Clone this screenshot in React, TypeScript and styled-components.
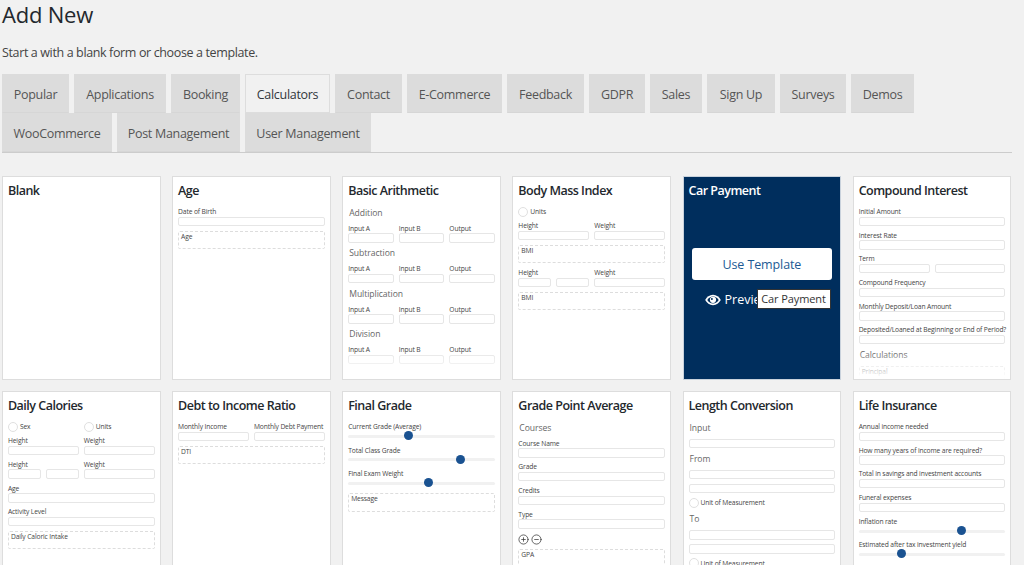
import React from "react";
import styled, { createGlobalStyle } from "styled-components";
import { CirclePlus, CircleMinus } from "lucide-react";

const Global = createGlobalStyle`
  html, body { margin: 0; padding: 0; height: 565px; overflow: hidden; background: #f1f1f1; }
  body { font-family: "Open Sans", "Noto Sans", sans-serif; color: #444; }
`;

const Page = styled.div`
  width: 1010px;
  margin-left: 2px;
`;
const Title = styled.h1`
  margin: 0;
  height: 29px;
  font-size: 22px;
  line-height: 28px;
  font-weight: 400;
  letter-spacing: -0.2px;
  color: #23282d;
`;
const Intro = styled.p`
  margin: 16px 0 13px;
  height: 16px;
  font-size: 12.5px;
  line-height: 16px;
  letter-spacing: -0.37px;
  color: #444;
`;
const Tabs = styled.nav`
  display: flex;
  flex-wrap: wrap;
  column-gap: 5px;
  height: 78px;
  border-bottom: 1px solid #ccc;
  align-content: flex-start;
`;
const Tab = styled.div<{ $active?: boolean; $w: number }>`
  box-sizing: border-box;
  flex: none;
  width: ${(p) => p.$w}px;
  height: 39px;
  padding-top: 2px;
  display: flex;
  align-items: center;
  justify-content: center;
  font-size: 12.5px;
  letter-spacing: -0.3px;
  border: 1px solid ${(p) => (p.$active ? "#ddd" : "#dcdcdc")};
  border-bottom-color: ${(p) => (p.$active ? "#ddd" : "#d6d6d6")};
  background: ${(p) => (p.$active ? "#f1f1f1" : "#dcdcdc")};
  color: ${(p) => (p.$active ? "#32373c" : "#555")};
`;
const Grid = styled.div`
  display: grid;
  grid-template-columns: repeat(6, 1fr);
  grid-auto-rows: 204px;
  column-gap: 11.4px;
  row-gap: 11px;
  width: 1009.5px;
  margin: 23px 0 0 -0.1px;
`;
const Card = styled.article`
  position: relative;
  box-sizing: border-box;
  overflow: hidden;
  padding: 6px 5px 0;
  background: #fff;
  border: 1px solid #ddd;
  &::after {
    content: "";
    position: absolute;
    left: 0;
    right: 0;
    bottom: 0;
    height: 28px;
    background: linear-gradient(rgba(255, 255, 255, 0), #fff);
  }
`;
const CardTitle = styled.h3`
  margin: 0 0 10px;
  height: 14px;
  font-size: 12.5px;
  line-height: 16px;
  font-weight: 600;
  letter-spacing: -0.5px;
  white-space: nowrap;
  color: #23282d;
`;
const Label = styled.div`
  height: 9.5px;
  font-size: 6.7px;
  line-height: 9.5px;
  letter-spacing: -0.12px;
  white-space: nowrap;
  color: #444;
`;
const Input = styled.div`
  box-sizing: border-box;
  height: 9.5px;
  border: 1px solid #e6e6e6;
  border-radius: 2px;
  background: #fff;
`;
const SplitInput = styled(Input)`
  flex: 1 1 0;
  min-width: 0;
`;
const Field = styled.div`
  flex: 1 1 0;
  min-width: 0;
  margin-bottom: 4.7px;
`;
const Row = styled.div`
  display: flex;
  gap: 5px;
`;
const Heading = styled.div<{ $top?: number }>`
  height: 12px;
  margin: ${(p) => p.$top ?? 0}px 0 4.8px 1px;
  font-size: 8.6px;
  line-height: 13px;
  letter-spacing: -0.05px;
  color: #666;
`;
const Output = styled.div`
  box-sizing: border-box;
  height: 18.5px;
  margin-bottom: 4.7px;
  padding: 0 2px;
  border: 1px dashed #ddd;
  border-radius: 2px;
  font-size: 6.7px;
  line-height: 9px;
  letter-spacing: -0.12px;
  color: #444;
`;
const RadioRow = styled.div`
  flex: 1 1 0;
  display: flex;
  align-items: center;
  gap: 2px;
  height: 9.5px;
  margin-bottom: 4.7px;
  font-size: 6.7px;
  letter-spacing: -0.12px;
  color: #444;
`;
const Dot = styled.span`
  box-sizing: border-box;
  flex: none;
  width: 10px;
  height: 10px;
  border: 1px solid #e0e0e0;
  border-radius: 50%;
  background: #fff;
`;
const Slider = styled.div`
  position: relative;
  height: 9.5px;
  display: flex;
  align-items: center;
  &::before {
    content: "";
    flex: 1;
    height: 3px;
    border-radius: 2px;
    background: #f1f1f1;
  }
`;
const Thumb = styled.span`
  position: absolute;
  top: -0.5px;
  width: 9px;
  height: 9px;
  margin-left: -4.5px;
  border-radius: 50%;
  background: #1a5291;
`;
const Repeater = styled.div`
  display: flex;
  gap: 2px;
  height: 11px;
  margin-bottom: 4px;
  color: #333;
`;

/* Car Payment, hover state */
const ActiveCard = styled.article`
  position: relative;
  box-sizing: border-box;
  display: flex;
  flex-direction: column;
  align-items: center;
  padding: 6px 0 0;
  background: #002e5d;
  border: 1px solid #c9d2dc;
`;
const ActiveTitle = styled.h3`
  align-self: flex-start;
  margin: 0 0 51px 5px;
  height: 14px;
  font-size: 12.5px;
  line-height: 16px;
  font-weight: 600;
  letter-spacing: -0.5px;
  color: #fff;
`;
const UseButton = styled.div`
  width: 140px;
  height: 32px;
  padding-top: 1px;
  box-sizing: border-box;
  display: flex;
  align-items: center;
  justify-content: center;
  border-radius: 3px;
  background: #fff;
  font-size: 12.5px;
  letter-spacing: -0.1px;
  color: #1d5a94;
`;
const Preview = styled.div`
  align-self: flex-start;
  display: flex;
  align-items: center;
  gap: 4px;
  margin: 11px 0 0 21px;
  font-size: 12.5px;
  line-height: 18px;
  color: #fff;
`;
const Tip = styled.div`
  position: absolute;
  left: 73px;
  top: 111.5px;
  box-sizing: border-box;
  width: 74px;
  height: 20px;
  display: flex;
  align-items: center;
  justify-content: center;
  background: #fff;
  border: 1px solid #333;
  font-size: 11px;
  letter-spacing: -0.1px;
  white-space: nowrap;
  color: #333;
`;

type Labelled = string | [string, number];
type Item =
  | { k: "f"; labels: Labelled[] }
  | { k: "o"; text: string }
  | { k: "h"; text: string; top?: number }
  | { k: "r"; labels: string[] }
  | { k: "s"; label: string; at: number }
  | { k: "i" }
  | { k: "p" };

const f = (...labels: Labelled[]): Item => ({ k: "f", labels });
const o = (text: string): Item => ({ k: "o", text });
const h = (text: string, top?: number): Item => ({ k: "h", text, top });
const r = (...labels: string[]): Item => ({ k: "r", labels });
const s = (label: string, at: number): Item => ({ k: "s", label, at });
const arithmetic = [f("Input A", "Input B", "Output")];

const cards: { title: string; items: Item[]; active?: boolean }[] = [
  { title: "Blank", items: [] },
  { title: "Age", items: [f("Date of Birth"), o("Age")] },
  {
    title: "Basic Arithmetic",
    items: [
      h("Addition"), ...arithmetic,
      h("Subtraction"), ...arithmetic,
      h("Multiplication"), ...arithmetic,
      h("Division"), ...arithmetic,
    ],
  },
  {
    title: "Body Mass Index",
    items: [r("Units"), f("Height", "Weight"), o("BMI"), f(["Height", 2], "Weight"), o("BMI")],
  },
  { title: "Car Payment", items: [], active: true },
  {
    title: "Compound Interest",
    items: [
      f("Initial Amount"), f("Interest Rate"), f(["Term", 2]),
      f("Compound Frequency"), f("Monthly Deposit/Loan Amount"),
      f("Deposited/Loaned at Beginning or End of Period?"),
      h("Calculations"), o("Principal"),
    ],
  },
  {
    title: "Daily Calories",
    items: [r("Sex", "Units"), f("Height", "Weight"), f(["Height", 2], "Weight"), f("Age"), f("Activity Level"), o("Daily Caloric Intake")],
  },
  { title: "Debt to Income Ratio", items: [f("Monthly Income", "Monthly Debt Payment"), o("DTI")] },
  {
    title: "Final Grade",
    items: [s("Current Grade (Average)", 41), s("Total Class Grade", 76.5), s("Final Exam Weight", 54.4), o("Message")],
  },
  {
    title: "Grade Point Average",
    items: [h("Courses"), f("Course Name"), f("Grade"), f("Credits"), f("Type"), { k: "p" }, o("GPA")],
  },
  {
    title: "Length Conversion",
    items: [
      h("Input"), { k: "i" },
      h("From", 2), { k: "i" }, { k: "i" }, r("Unit of Measurement"),
      h("To", 1), { k: "i" }, { k: "i" }, r("Unit of Measurement"),
    ],
  },
  {
    title: "Life Insurance",
    items: [
      f("Annual income needed"), f("How many years of income are required?"),
      f("Total in savings and investment accounts"), f("Funeral expenses"),
      s("Inflation rate", 70), s("Estimated after tax investment yield", 29),
    ],
  },
];

const tabs: [string, number, boolean?][] = [
  ["Popular", 67], ["Applications", 92], ["Booking", 69], ["Calculators", 85, true],
  ["Contact", 67], ["E-Commerce", 95], ["Feedback", 77], ["GDPR", 56], ["Sales", 52],
  ["Sign Up", 68], ["Surveys", 66], ["Demos", 63],
  ["WooCommerce", 110], ["Post Management", 123], ["User Management", 126],
];

function FieldGroup({ label }: { label: Labelled }) {
  const text = typeof label === "string" ? label : label[0];
  const inputs = typeof label === "string" ? 1 : label[1];
  return (
    <Field>
      <Label>{text}</Label>
      <Row>
        {Array.from({ length: inputs }, (_, i) => (
          <SplitInput key={i} />
        ))}
      </Row>
    </Field>
  );
}

function renderItem(item: Item, i: number) {
  switch (item.k) {
    case "f":
      return (
        <Row key={i}>
          {item.labels.map((l, j) => (
            <FieldGroup key={j} label={l} />
          ))}
        </Row>
      );
    case "o":
      return <Output key={i}>{item.text}</Output>;
    case "h":
      return <Heading key={i} $top={item.top}>{item.text}</Heading>;
    case "r":
      return (
        <Row key={i}>
          {item.labels.map((l) => (
            <RadioRow key={l}>
              <Dot />
              {l}
            </RadioRow>
          ))}
        </Row>
      );
    case "s":
      return (
        <Field key={i}>
          <Label>{item.label}</Label>
          <Slider>
            <Thumb style={{ left: `${item.at}%` }} />
          </Slider>
        </Field>
      );
    case "i":
      return (
        <Field key={i}>
          <Input />
        </Field>
      );
    case "p":
      return (
        <Repeater key={i}>
          <CirclePlus size={11} strokeWidth={1.6} />
          <CircleMinus size={11} strokeWidth={1.6} />
        </Repeater>
      );
  }
}

function EyeIcon() {
  return (
    <svg width="16" height="12" viewBox="0 0 16 12" aria-hidden="true">
      <path d="M8 .8C4.6.8 1.9 2.9.2 6c1.7 3.1 4.4 5.2 7.8 5.2s6.1-2.1 7.8-5.2C14.100 2.900 11.400.8 8 .8Z" fill="#fff" />
      <path d="M2.300 6C3.600 3.900 5.500 2.500 8 2.500s4.400 1.400 5.700 3.500C12.400 8.100 10.500 9.500 8 9.500S3.600 8.100 2.300 6Z" fill="#002e5d" />
      <circle cx="8" cy="5.800" r="3.100" fill="#fff" />
      <circle cx="6.900" cy="4.900" r="1" fill="#002e5d" />
    </svg>
  );
}

export default function App() {
  return (
    <Page>
      <Global />
      <Title>Add New</Title>
      <Intro>Start a with a blank form or choose a template.</Intro>
      <Tabs>
        {tabs.map(([name, w, active]) => (
          <Tab key={name} $w={w} $active={active}>{name}</Tab>
        ))}
      </Tabs>
      <Grid>
        {cards.map((c) =>
          c.active ? (
            <ActiveCard key={c.title}>
              <ActiveTitle>{c.title}</ActiveTitle>
              <UseButton>Use Template</UseButton>
              <Preview>
                <EyeIcon />
                Preview
              </Preview>
              <Tip>{c.title}</Tip>
            </ActiveCard>
          ) : (
            <Card key={c.title}>
              <CardTitle>{c.title}</CardTitle>
              {c.items.map(renderItem)}
            </Card>
          )
        )}
      </Grid>
    </Page>
  );
}
